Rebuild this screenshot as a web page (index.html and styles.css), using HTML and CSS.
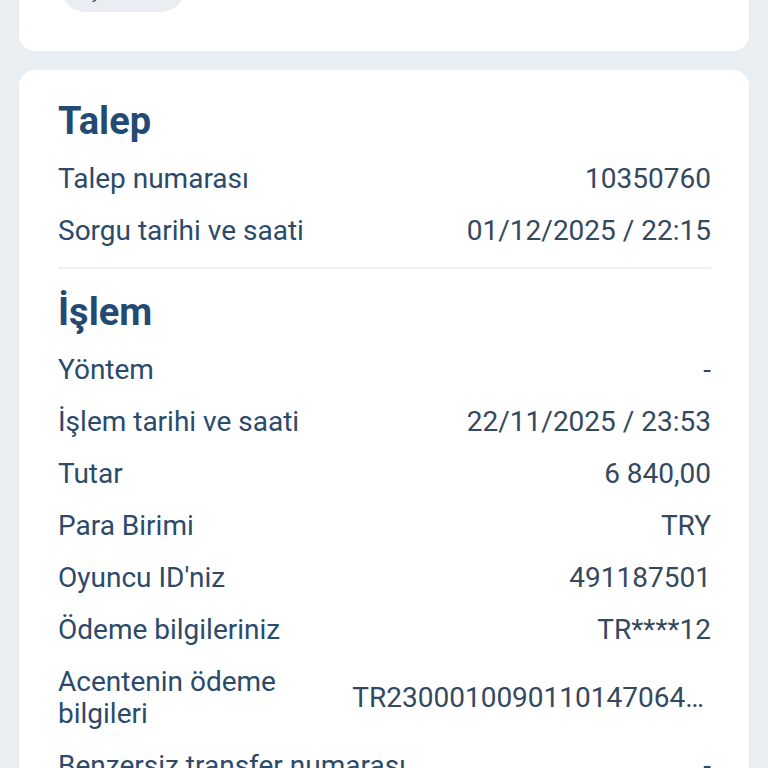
FILE: index.html
```html
<!DOCTYPE html>
<html lang="tr">
<head>
  <meta charset="UTF-8" />
  <meta name="viewport" content="width=device-width, initial-scale=1" />
  <title>Talep</title>
  <link rel="stylesheet" href="styles.css">
</head>
<body>
  <div class="card card-top">
    <span class="pill">İşlemler</span>
  </div>

  <div class="card">
    <h2>Talep</h2>
    <div class="row"><span class="label">Talep numarası</span><span class="value">10350760</span></div>
    <div class="row"><span class="label">Sorgu tarihi ve saati</span><span class="value">01/12/2025 / 22:15</span></div>

    <hr class="divider" />

    <h2 class="second">İşlem</h2>
    <div class="row"><span class="label">Yöntem</span><span class="value">-</span></div>
    <div class="row"><span class="label">İşlem tarihi ve saati</span><span class="value">22/11/2025 / 23:53</span></div>
    <div class="row"><span class="label">Tutar</span><span class="value">6 840,00</span></div>
    <div class="row"><span class="label">Para Birimi</span><span class="value">TRY</span></div>
    <div class="row"><span class="label">Oyuncu ID'niz</span><span class="value">491187501</span></div>
    <div class="row"><span class="label">Ödeme bilgileriniz</span><span class="value">TR****12</span></div>
    <div class="row"><span class="label">Acentenin ödeme bilgileri</span><span class="value">TR230001009011014706412345</span></div>
    <div class="row"><span class="label">Benzersiz transfer numarası</span><span class="value">-</span></div>
  </div>
</body>
</html>
```

FILE: styles.css
```css
body {
  margin: 0;
  padding: 0 19px;
  background: #e9eef2;
  font-family: Roboto, "Noto Sans", sans-serif;
  color: #2c4a6a;
}
.card {
  background: #fff;
  border-radius: 16px;
  padding: 29px 38px 20px 39px;
  margin-bottom: 19px;
}
.card-top {
  margin-top: -40px;
  height: 91px;
  padding: 0 0 0 41px;
  box-sizing: border-box;
}
.pill {
  display: block;
  width: 126px;
  height: 52px;
  border-radius: 26px;
  background: #eaeef2;
  color: #3b5573;
  font-size: 24px;
  line-height: 58px;
  text-align: center;
  overflow: hidden;
}
h2 {
  margin: 0 0 10px;
  font-size: 38px;
  line-height: 44px;
  font-weight: 700;
  color: #234a72;
}
h2.second {
  margin-bottom: 10px;
}
.row {
  display: flex;
  justify-content: space-between;
  align-items: center;
  gap: 20px;
  min-height: 52px;
  padding: 10px 0;
  box-sizing: border-box;
  font-size: 28px;
  line-height: 32px;
}
.label {
  flex: 1 1 auto;
  min-width: 0;
}
.value {
  max-width: 55%;
  white-space: nowrap;
  overflow: hidden;
  text-overflow: ellipsis;
  color: #34495e;
  text-align: right;
}
.divider {
  border: none;
  border-top: 2px solid #eef1f4;
  margin: 10px 0 21px;
}
```
